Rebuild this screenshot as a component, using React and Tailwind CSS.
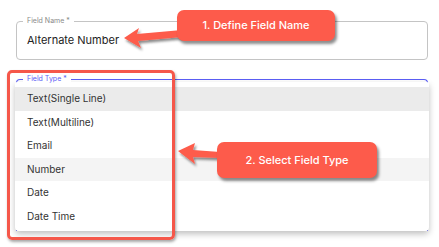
import React from 'react';

const options = ['Text(Single Line)', 'Text(Multiline)', 'Email', 'Number', 'Date', 'Date Time'];

const Callout = ({ className, children }) => (
    <div className={`absolute flex items-center justify-center rounded-[7px] bg-[#fd5b4b] text-white font-medium shadow-[2px_3px_3px_rgba(0,0,0,0.45)] ${className}`}>
        {children}
    </div>
);

export default function App() {
    return (
        <div className="relative w-[439px] h-[247px] bg-white overflow-hidden" style={{ fontFamily: '"Inter", "Liberation Sans", sans-serif' }}>
            <div className="flex flex-col gap-[19px] pt-[21px] pl-[16px] pr-[11px]">
                {/* Field name */}
                <div className="relative h-[39px] rounded-[4px] border border-[#c4c4c4] flex items-center pl-[10px]">
                    <span className="absolute -top-[6px] left-[6px] bg-white px-[4px] text-[7px] leading-[10px] text-[#8a8a8a]">Field Name *</span>
                    <span className="text-[11px] text-[#222]">Alternate Number</span>
                </div>

                {/* Field type with open menu */}
                <div className="relative rounded-t-[4px] border border-b-0 border-[#5b5ef5]">
                    <span className="absolute -top-[6px] left-[6px] z-10 bg-white px-[4px] text-[7px] leading-[10px] text-[#5b5ef5]">Field Type *</span>
                    <div className="-mx-[2px] mt-[2px] flex flex-col rounded-b-[4px] rounded-t-[2px] bg-white pt-[5px] pb-[3px] shadow-[0_3px_6px_rgba(0,0,0,0.25)]">
                        {options.map((o, i) => (
                            <div
                                key={o}
                                className={`h-[23.5px] flex items-center pl-[12px] text-[10px] text-[#333] ${i === 0 ? 'bg-[#ebebeb]' : i === 3 ? 'bg-[#f4f4f4]' : ''}`}
                            >
                                {o}
                            </div>
                        ))}
                    </div>
                </div>
            </div>

            {/* Highlight box */}
            <div className="absolute left-[7px] top-[70px] w-[168px] h-[170px] rounded-[5px] border-[3px] border-[#f5574a] shadow-[1px_2px_3px_rgba(0,0,0,0.35)]" />

            {/* Arrows */}
            <svg className="absolute left-0 top-0" width="439" height="247" viewBox="0 0 439 247">
                <defs>
                    <filter id="sh" x="-20%" y="-20%" width="140%" height="160%">
                        <feDropShadow dx="1.5" dy="2.5" stdDeviation="1.2" floodColor="#000" floodOpacity="0.45" />
                    </filter>
                </defs>
                <polygon filter="url(#sh)" fill="#fd5b4b" points="124,38 139,28 137,34 182,30 182,37 138,41 141,48" />
                <polygon filter="url(#sh)" fill="#fd5b4b" points="178,151 195,143 193,150 220,152 220,158 193,157 195,164" />
            </svg>

            <Callout className="left-[177px] top-[10px] w-[158px] h-[31px] text-[11px]">1. Define Field Name</Callout>
            <Callout className="left-[217px] top-[142px] w-[160px] h-[36px] text-[11px]">2. Select Field Type</Callout>
        </div>
    );
}
